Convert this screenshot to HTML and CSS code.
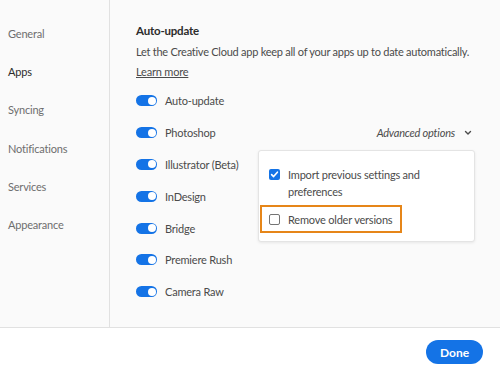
FILE: index.html
```html
<!DOCTYPE html>
<html lang="en">
<head>
    <meta charset="UTF-8">
    <meta name="viewport" content="width=device-width, initial-scale=1.0">
    <title>Preferences</title>
    <link rel="stylesheet" href="styles.css">
</head>
<body>
    <div class="main">
        <div class="sidebar">
            <div class="nav-item">General</div>
            <div class="nav-item active">Apps</div>
            <div class="nav-item">Syncing</div>
            <div class="nav-item">Notifications</div>
            <div class="nav-item">Services</div>
            <div class="nav-item">Appearance</div>
        </div>
        <div class="content">
            <div class="title">Auto-update</div>
            <div class="desc">Let the Creative Cloud app keep all of your apps up to date automatically.</div>
            <a class="learn" href="#">Learn more</a>
            <div class="apps-list">
                <div class="app-row"><span class="toggle"></span>Auto-update</div>
                <div class="app-row">
                    <span class="toggle"></span>Photoshop
                    <span class="advanced">Advanced options
                        <svg width="8" height="6" viewBox="0 0 8 6"><path d="M1.5 1.5 L4 4 L6.5 1.5" fill="none" stroke="#4b4b4b" stroke-width="1.4" stroke-linecap="round" stroke-linejoin="round"/></svg>
                    </span>
                </div>
                <div class="app-row"><span class="toggle"></span>Illustrator (Beta)</div>
                <div class="app-row"><span class="toggle"></span>InDesign</div>
                <div class="app-row"><span class="toggle"></span>Bridge</div>
                <div class="app-row"><span class="toggle"></span>Premiere Rush</div>
                <div class="app-row"><span class="toggle"></span>Camera Raw</div>
            </div>
            <div class="popover">
                <div class="option">
                    <span class="checkbox checked">
                        <svg width="11" height="11" viewBox="0 0 11 11"><path d="M2.6 5.6 L4.6 7.6 L8.4 3.2" fill="none" stroke="#fff" stroke-width="1.6" stroke-linecap="round" stroke-linejoin="round"/></svg>
                    </span>
                    <span>Import previous settings and preferences</span>
                </div>
                <div class="option focused">
                    <span class="checkbox"></span>
                    <span>Remove older versions</span>
                </div>
            </div>
        </div>
    </div>
    <footer>
        <button class="done">Done</button>
    </footer>
</body>
</html>
```

FILE: styles.css
```css
body {
    margin: 0;
    font-family: Lato, "Open Sans", sans-serif;
    letter-spacing: -0.2px;
    width: 500px;
    height: 376px;
    overflow: hidden;
    display: flex;
    flex-direction: column;
    color: #4b4b4b;
}

.main {
    height: 328px;
    display: flex;
    background-color: #fafafa;
    border-bottom: 1px solid #e1e1e1;
    box-sizing: border-box;
}

.sidebar {
    width: 110px;
    border-right: 1px solid #e1e1e1;
    box-sizing: border-box;
    padding-top: 15px;
}

.nav-item {
    height: 38.2px;
    line-height: 38px;
    padding-left: 8px;
    font-size: 11px;
    color: #6e6e6e;
}

.nav-item.active {
    color: #2c2c2c;
}

.content {
    flex: 1;
    position: relative;
    padding: 22px 0 0 26px;
}

.title {
    font-size: 11.5px;
    font-weight: bold;
    color: #2c2c2c;
    line-height: 17px;
}

.desc {
    margin-top: 4px;
    font-size: 11px;
    letter-spacing: -0.25px;
    line-height: 17px;
}

.learn {
    display: inline-block;
    font-size: 11px;
    line-height: 17px;
    color: #4b4b4b;
    text-decoration: underline;
}

.apps-list {
    margin-top: 5px;
}

.app-row {
    height: 31.8px;
    display: flex;
    align-items: center;
    font-size: 11px;
    color: #4b4b4b;
}

.toggle {
    width: 21px;
    height: 11px;
    border-radius: 6px;
    background-color: #1473e6;
    margin-right: 8px;
    position: relative;
    flex-shrink: 0;
}

.toggle::after {
    content: '';
    position: absolute;
    right: 1.5px;
    top: 1.5px;
    width: 8px;
    height: 8px;
    border-radius: 50%;
    background-color: #ffffff;
}

.advanced {
    margin-left: auto;
    margin-right: 28px;
    font-style: italic;
    display: flex;
    align-items: center;
    gap: 9px;
}

.popover {
    position: absolute;
    left: 148px;
    top: 150px;
    width: 217px;
    height: 92px;
    box-sizing: border-box;
    background-color: #ffffff;
    border: 1px solid #e4e4e4;
    border-radius: 3px;
    box-shadow: 0 1px 3px rgba(0, 0, 0, 0.08);
    padding-top: 15px;
    font-size: 11px;
    line-height: 17px;
}

.option {
    display: flex;
    align-items: flex-start;
    padding-left: 10px;
    padding-right: 30px;
}

.option.focused {
    margin-top: 5px;
    margin-left: 1px;
    width: 142px;
    height: 28px;
    box-sizing: border-box;
    border: 2px solid #e68619;
    padding-left: 7px;
    padding-right: 0;
    align-items: center;
}

.checkbox {
    width: 11px;
    height: 11px;
    box-sizing: border-box;
    border: 1.5px solid #747474;
    border-radius: 2px;
    margin-right: 8px;
    margin-top: 3px;
    flex-shrink: 0;
    display: flex;
}

.option.focused .checkbox {
    margin-top: 0;
}

.checkbox.checked {
    border: none;
    background-color: #1473e6;
}

footer {
    flex: 1;
    background-color: #ffffff;
    display: flex;
    align-items: center;
    justify-content: flex-end;
    padding-right: 17px;
}

.done {
    width: 57px;
    height: 24px;
    border: none;
    border-radius: 12px;
    background-color: #1473e6;
    color: #ffffff;
    font-family: Lato, sans-serif;
    font-weight: bold;
    font-size: 12px;
    padding: 0;
}
```
